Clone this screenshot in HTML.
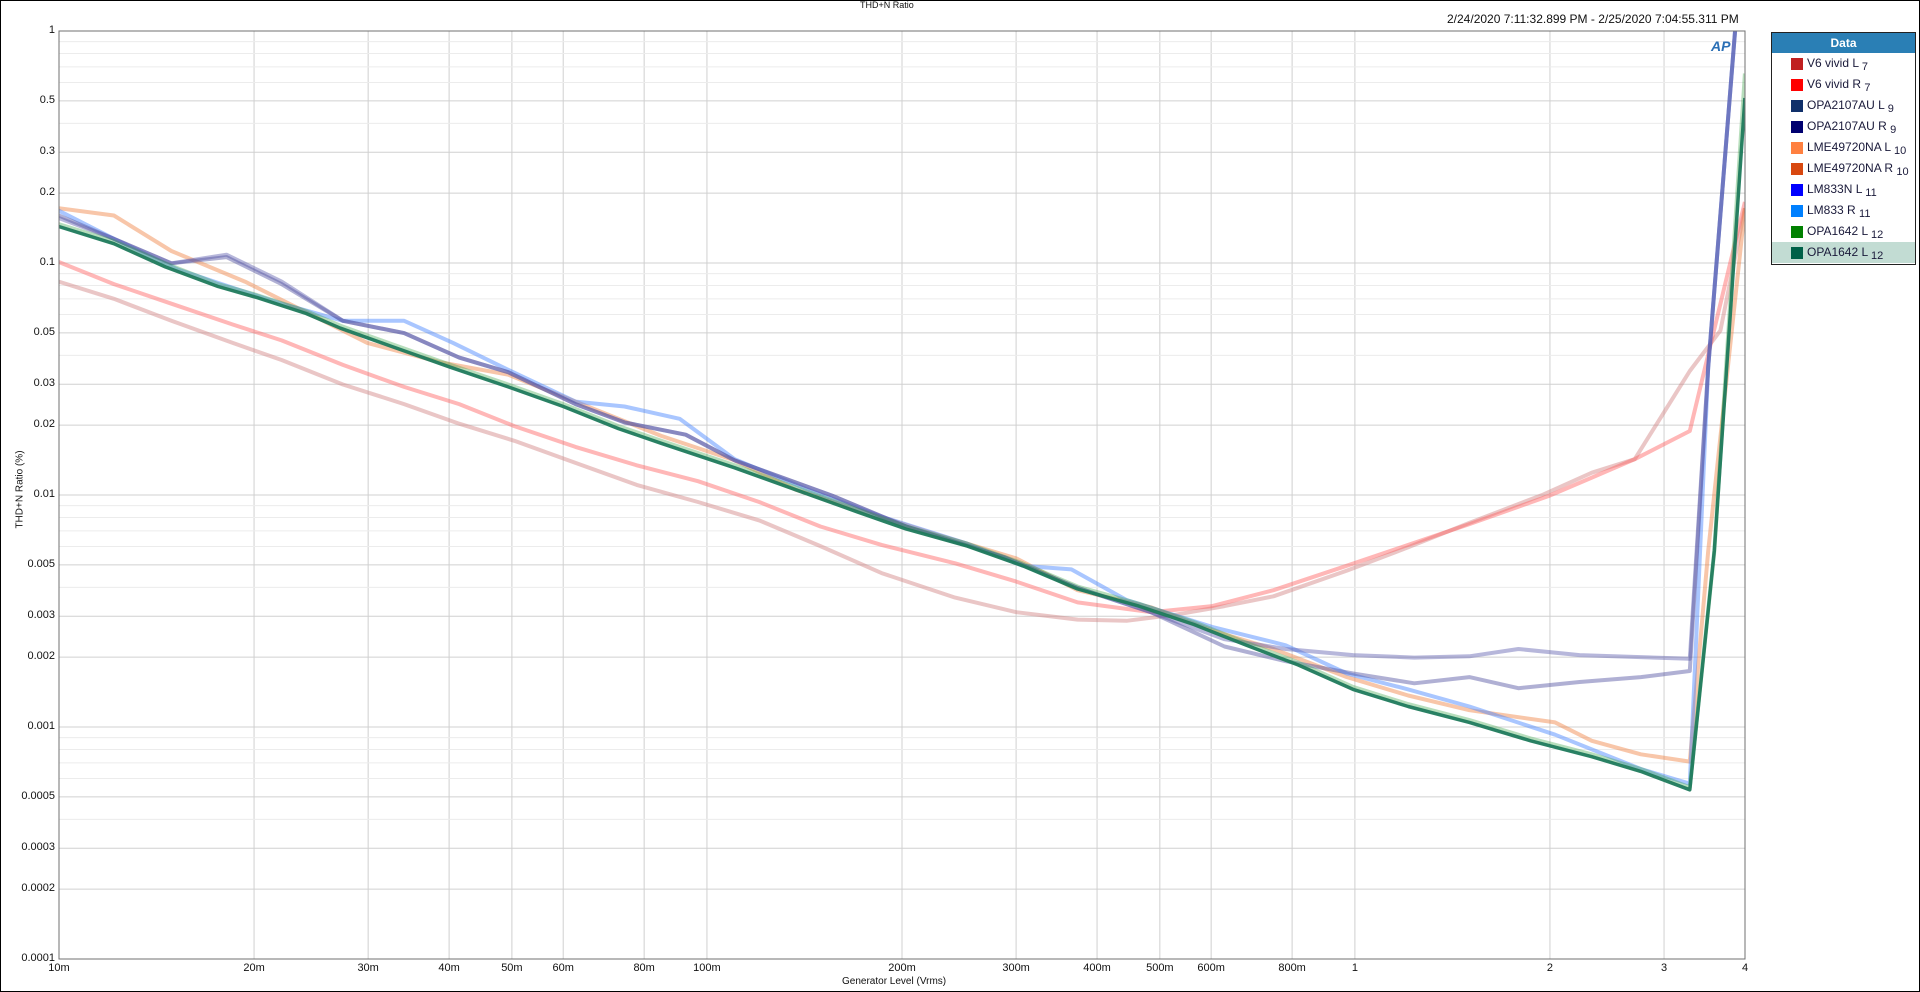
<!DOCTYPE html>
<html><head><meta charset="utf-8">
<style>
html,body{margin:0;padding:0;background:#fff;}
body{width:1920px;height:992px;overflow:hidden;position:relative;font-family:"Liberation Sans",sans-serif;}
#frame{position:absolute;left:0;top:0;width:1918px;height:990px;border:1px solid #000;}
.t{position:absolute;font-size:11px;color:#111;white-space:nowrap;}
#legend{position:absolute;left:1771px;top:32px;width:143px;height:231px;border:1px solid #222;background:#fff;}
#legend .hd{background:#2a7fb5;color:#fff;font-weight:bold;font-size:12px;text-align:center;height:20px;line-height:20px;}
#legend .r{height:21px;line-height:21px;font-size:12px;color:#1a1a3a;padding-left:35px;position:relative;}
#legend .r i{position:absolute;left:19px;top:5px;width:12px;height:12px;}
#legend .r sub{font-size:11px;vertical-align:-3px;}
</style></head><body>
<div id="frame"></div>
<svg id="s" width="1920" height="992" style="position:absolute;left:0;top:0"></svg>
<div class="t" style="left:860px;top:0px;font-size:9px">THD+N Ratio</div>
<div class="t" style="left:1447px;top:12px;font-size:12px">2/24/2020 7:11:32.899 PM - 2/25/2020 7:04:55.311 PM</div>
<div class="t" style="left:-40px;top:484px;transform:rotate(-90deg);font-size:10px;width:120px;text-align:center">THD+N Ratio (%)</div>
<div class="t" style="left:842px;top:976px;font-size:10px">Generator Level (Vrms)</div>
<div class="t" style="left:1711px;top:38px;font-size:14px;font-style:italic;font-weight:bold;color:#2a6fb5">AP</div>
<div id="legend"><div class="hd">Data</div>
<div class="r"><i style="background:#c02020"></i>V6 vivid L <sub>7</sub></div>
<div class="r"><i style="background:#ff0000"></i>V6 vivid R <sub>7</sub></div>
<div class="r"><i style="background:#10306a"></i>OPA2107AU L <sub>9</sub></div>
<div class="r"><i style="background:#000070"></i>OPA2107AU R <sub>9</sub></div>
<div class="r"><i style="background:#ff8040"></i>LME49720NA L <sub>10</sub></div>
<div class="r"><i style="background:#d84810"></i>LME49720NA R <sub>10</sub></div>
<div class="r"><i style="background:#0000ff"></i>LM833N L <sub>11</sub></div>
<div class="r"><i style="background:#0080ff"></i>LM833 R <sub>11</sub></div>
<div class="r"><i style="background:#008000"></i>OPA1642 L <sub>12</sub></div>
<div class="r" style="background:#c2dcd3"><i style="background:#006048"></i>OPA1642 L <sub>12</sub></div>
</div>
<script>
var s=document.getElementById('s'),h='';
var L=59,R=1745,T=31,B=959;
function X(v){return L+Math.log(v/0.01)/Math.log(400)*(R-L);}
function Y(v){return T-Math.log10(v)*232;}
var xs=[[0.01,'10m'],[0.02,'20m'],[0.03,'30m'],[0.04,'40m'],[0.05,'50m'],[0.06,'60m'],[0.08,'80m'],[0.1,'100m'],[0.2,'200m'],[0.3,'300m'],[0.4,'400m'],[0.5,'500m'],[0.6,'600m'],[0.8,'800m'],[1,'1'],[2,'2'],[3,'3'],[4,'4']];
var lab='';
xs.forEach(function(a){var x=X(a[0]);h+='<line x1="'+x+'" y1="'+T+'" x2="'+x+'" y2="'+B+'" stroke="#d0d0d0"/>';
lab+='<div class="t" style="left:'+(x-20)+'px;top:962px;width:40px;text-align:center;font-size:11px">'+a[1]+'</div>';});
var vals=[[1,1,'1']];
[0.1,0.01,0.001,0.0001].forEach(function(d){for(var m=1;m<=9;m++){var v=d*m;var maj=(m==1||m==2||m==3||m==5);var p=-Math.round(Math.log10(d));vals.push([v,maj,maj?(m*d).toFixed(p):'']);}});
vals.forEach(function(a){var y=Y(a[0]);
h+='<line x1="'+L+'" y1="'+y+'" x2="'+R+'" y2="'+y+'" stroke="'+(a[1]?'#d0d0d0':'#ececec')+'"/>';
if(a[1])lab+='<div class="t" style="left:0;top:'+(y-7)+'px;width:55px;text-align:right;font-size:11px">'+a[2]+'</div>';});
var k=1920/1568;
function P(pts,c,w,o){var d='';pts.forEach(function(p,i){d+=(i?'L':'M')+(p[0]*k).toFixed(1)+' '+(p[1]*k).toFixed(1);});
h+='<path d="'+d+'" fill="none" stroke="'+c+'" stroke-width="'+w+'" stroke-opacity="'+o+'" stroke-linejoin="round"/>';}
var clip='<clipPath id="c"><rect x="'+L+'" y="'+T+'" width="'+(R-L)+'" height="'+(B-T)+'"/></clipPath><g clip-path="url(#c)">';
var grid=h;h='';
P([[48,230],[93,244],[140,262],[190,280],[230,294],[280,314],[330,330],[375,346],[420,360],[470,378],[520,396],[570,410],[620,425],[670,446],[720,468],[780,488],[830,500],[880,506],[920,507],[960,502],[1000,495],[1040,487],[1100,466],[1150,447],[1200,427],[1260,404],[1300,386],[1335,375],[1380,303],[1405,270],[1425,170]],'#d08080',4,0.45);
P([[48,214],[93,232],[140,248],[190,265],[230,278],[280,298],[330,316],[375,330],[420,348],[470,365],[520,380],[570,393],[620,410],[670,430],[720,445],[780,460],[830,475],[880,492],[940,500],[990,495],[1040,482],[1100,462],[1150,445],[1200,428],[1265,405],[1300,390],[1335,375],[1380,352],[1425,165]],'#ff6060',4,0.45);
P([[48,170],[93,176],[140,205],[200,230],[250,255],[300,280],[360,296],[415,306],[470,328],[540,356],[600,376],[650,400],[700,416],[760,435],[830,456],[880,482],[940,496],[990,515],[1040,530],[1100,553],[1150,568],[1200,580],[1270,590],[1300,605],[1340,616],[1380,622],[1395,450],[1425,170]],'#f08040',4,0.45);
P([[48,172],[93,195],[145,220],[190,235],[230,248],[280,262],[330,262],[370,280],[415,302],[470,328],[510,332],[555,342],[600,375],[660,400],[720,422],[790,444],[835,462],[875,465],[920,490],[990,512],[1050,527],[1100,550],[1150,563],[1200,577],[1270,600],[1340,628],[1380,640],[1395,300],[1417,25]],'#4080ff',4,0.45);
P([[48,178],[93,195],[140,215],[185,208],[230,230],[280,262],[330,272],[375,292],[415,304],[470,330],[510,345],[560,355],[600,376],[680,405],[740,430],[820,455],[880,480],[940,500],[1000,522],[1050,530],[1105,535],[1155,537],[1200,536],[1240,530],[1290,535],[1380,538],[1395,300],[1417,25]],'#6060b0',4,0.45);
P([[48,176],[93,195],[140,215],[185,210],[230,232],[280,262],[330,272],[375,292],[415,304],[470,330],[510,345],[560,355],[600,376],[680,405],[740,430],[820,455],[880,480],[940,500],[1000,528],[1050,540],[1105,550],[1155,558],[1200,553],[1240,562],[1290,557],[1340,553],[1380,548],[1395,300],[1417,25]],'#5050a0',4,0.45);
P([[48,183],[93,197],[135,215],[178,232],[210,241],[250,254],[278,266],[320,281],[368,298],[415,314],[460,330],[505,348],[540,360],[600,380],[650,398],[700,416],[740,430],[790,444],[835,460],[880,479],[930,493],[975,508],[1018,525],[1060,541],[1105,561],[1150,575],[1200,588],[1250,603],[1300,616],[1340,628],[1380,643],[1400,450],[1425,60]],'#30a040',4,0.35);
P([[48,185],[93,199],[135,218],[178,234],[210,243],[250,256],[278,268],[320,283],[368,300],[415,316],[460,332],[505,350],[540,362],[600,382],[650,400],[700,418],[740,432],[790,446],[835,462],[880,481],[930,495],[975,510],[1018,527],[1060,543],[1105,563],[1150,577],[1200,590],[1250,605],[1300,618],[1340,630],[1380,645],[1400,450],[1425,80]],'#1f7a5c',3.5,0.95);
s.innerHTML=grid+clip+h+'</g><rect x="'+L+'" y="'+T+'" width="'+(R-L)+'" height="'+(B-T)+'" fill="none" stroke="#707070"/>';
document.body.insertAdjacentHTML('beforeend',lab);
</script>
</body></html>
